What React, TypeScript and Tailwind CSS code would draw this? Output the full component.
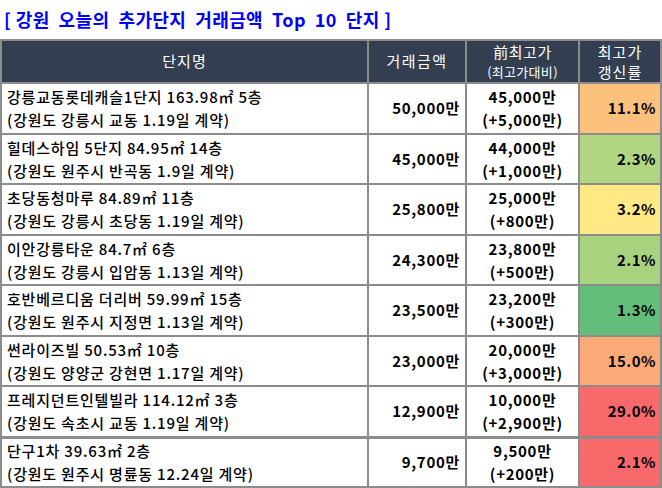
const rows = [
  { name: '강릉교동롯데캐슬1단지 163.98㎡ 5층', loc: '(강원도 강릉시 교동 1.19일 계약)', amt: '50,000만', prev: '45,000만', diff: '(+5,000만)', rate: '11.1%', bg: 'bg-[#fcc27d]' },
  { name: '힐데스하임 5단지 84.95㎡ 14층', loc: '(강원도 원주시 반곡동 1.9일 계약)', amt: '45,000만', prev: '44,000만', diff: '(+1,000만)', rate: '2.3%', bg: 'bg-[#b1d580]' },
  { name: '초당동청마루 84.89㎡ 11층', loc: '(강원도 강릉시 초당동 1.19일 계약)', amt: '25,800만', prev: '25,000만', diff: '(+800만)', rate: '3.2%', bg: 'bg-[#ffe984]' },
  { name: '이안강릉타운 84.7㎡ 6층', loc: '(강원도 강릉시 입암동 1.13일 계약)', amt: '24,300만', prev: '23,800만', diff: '(+500만)', rate: '2.1%', bg: 'bg-[#a9d27f]' },
  { name: '호반베르디움 더리버 59.99㎡ 15층', loc: '(강원도 원주시 지정면 1.13일 계약)', amt: '23,500만', prev: '23,200만', diff: '(+300만)', rate: '1.3%', bg: 'bg-[#63be7b]' },
  { name: '썬라이즈빌 50.53㎡ 10층', loc: '(강원도 양양군 강현면 1.17일 계약)', amt: '23,000만', prev: '20,000만', diff: '(+3,000만)', rate: '15.0%', bg: 'bg-[#fbaa77]' },
  { name: '프레지던트인텔빌라 114.12㎡ 3층', loc: '(강원도 속초시 교동 1.19일 계약)', amt: '12,900만', prev: '10,000만', diff: '(+2,900만)', rate: '29.0%', bg: 'bg-[#f8696b]' },
  { name: '단구1차 39.63㎡ 2층', loc: '(강원도 원주시 명륜동 12.24일 계약)', amt: '9,700만', prev: '9,500만', diff: '(+200만)', rate: '2.1%', bg: 'bg-[#f8696b]' },
]

const font = "font-['Noto_Sans_CJK_KR','Noto_Sans',sans-serif]"

export default function App() {
  return (
    <div className={`w-[662px] h-[488px] bg-white ${font} text-black overflow-hidden`}>
      <div className="h-[39px] flex items-center pl-[4px] pb-[1px]">
        <h1 className="text-[18px] font-bold text-[#0000ff] whitespace-pre tracking-[0.4px] leading-none">
          [ 강원  오늘의  추가단지  거래금액  Top  10  단지 ]
        </h1>
      </div>
      <div className="grid grid-cols-[365px_96px_111px_80px] grid-rows-[41px_repeat(8,48.5px)] gap-[2px] p-[2px] bg-[#8c8c8c] w-[662px]">
        <div className="bg-[#333f50] text-white flex items-center justify-center text-[15px] tracking-[1px]">단지명</div>
        <div className="bg-[#333f50] text-white flex items-center justify-center text-[15px] tracking-[1.5px]">거래금액</div>
        <div className="bg-[#333f50] text-white flex flex-col items-center justify-center leading-[20px]">
          <span className="text-[15px] tracking-[0.5px]">前최고가</span>
          <span className="text-[13px] tracking-[0.3px]">(최고가대비)</span>
        </div>
        <div className="bg-[#333f50] text-white flex flex-col items-center justify-center text-[15px] leading-[20px] tracking-[1px]">
          <span>최고가</span>
          <span>갱신률</span>
        </div>
        {rows.map((r, i) => (
          <Row key={r.name} {...r} last={i === rows.length - 1} />
        ))}
      </div>
    </div>
  )
}

function Row({ name, loc, amt, prev, diff, rate, bg, last }: (typeof rows)[number] & { last: boolean }) {
  // the last row sits under a slightly heavier rule
  const top = last ? 'border-t border-[#8c8c8c]' : ''
  return (
    <>
      <div className={`bg-white ${top} flex flex-col justify-center pl-[5px] text-[15px] leading-[23px] font-medium tracking-[0.8px] whitespace-nowrap`}>
        <span>{name}</span>
        <span>{loc}</span>
      </div>
      <div className={`bg-white ${top} flex items-center justify-end pr-[5px] text-[15px] font-bold tracking-[0.7px]`}>{amt}</div>
      <div className={`bg-white ${top} flex flex-col items-center justify-center text-[15px] leading-[23px] font-bold tracking-[0.7px]`}>
        <span>{prev}</span>
        <span>{diff}</span>
      </div>
      <div className={`${bg} ${top} flex items-center justify-end pr-[4px] text-[15px] font-bold tracking-[0.5px]`}>{rate}</div>
    </>
  )
}
